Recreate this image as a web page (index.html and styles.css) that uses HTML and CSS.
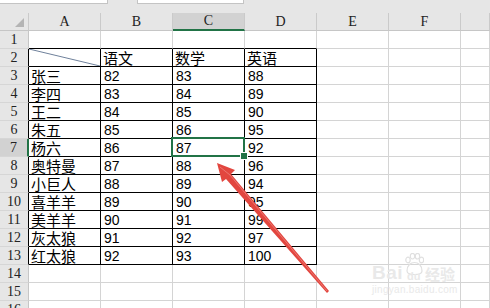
FILE: index.html
```html
<!DOCTYPE html>
<html lang="zh">
<head>
<meta charset="utf-8">
<link rel="stylesheet" href="styles.css">
</head>
<body>
<div class="app">
  <div class="topbar"><div class="box namebox"></div><div class="gap"></div><div class="box fxbox"></div></div>
  <div class="band"></div>
  <div class="sheet">
    <div class="hd corner"><span class="tri"></span></div><div class="hd">A</div><div class="hd">B</div><div class="hd selc">C</div><div class="hd">D</div><div class="hd">E</div><div class="hd">F</div><div class="hd"></div>

    <div class="rh">1</div><div class="c kb"></div><div class="c kb"></div><div class="c kb"></div><div class="c kb"></div><div class="c"></div><div class="c"></div><div class="c"></div>

    <div class="rh kr">2</div><div class="c k diag"><svg class="dl" viewBox="0 0 71 17" preserveAspectRatio="none"><line x1="0" y1="0" x2="71" y2="17"/></svg></div><div class="c k zh"><span>语文</span></div><div class="c k zh"><span>数学</span></div><div class="c k zh"><span>英语</span></div><div class="c"></div><div class="c"></div><div class="c"></div>

    <div class="rh kr">3</div><div class="c k zh"><span>张三</span></div><div class="c k">82</div><div class="c k">83</div><div class="c k">88</div><div class="c"></div><div class="c"></div><div class="c"></div>
    <div class="rh kr">4</div><div class="c k zh"><span>李四</span></div><div class="c k">83</div><div class="c k">84</div><div class="c k">89</div><div class="c"></div><div class="c"></div><div class="c"></div>
    <div class="rh kr">5</div><div class="c k zh"><span>王二</span></div><div class="c k">84</div><div class="c k">85</div><div class="c k">90</div><div class="c"></div><div class="c"></div><div class="c"></div>
    <div class="rh kr">6</div><div class="c k zh"><span>朱五</span></div><div class="c k">85</div><div class="c k">86</div><div class="c k">95</div><div class="c"></div><div class="c"></div><div class="c"></div>
    <div class="rh selr">7</div><div class="c k zh"><span>杨六</span></div><div class="c k">86</div><div class="c k active">87</div><div class="c k">92</div><div class="c"></div><div class="c"></div><div class="c"></div>
    <div class="rh kr">8</div><div class="c k zh"><span>奥特曼</span></div><div class="c k">87</div><div class="c k">88</div><div class="c k">96</div><div class="c"></div><div class="c"></div><div class="c"></div>
    <div class="rh kr">9</div><div class="c k zh"><span>小巨人</span></div><div class="c k">88</div><div class="c k">89</div><div class="c k">94</div><div class="c"></div><div class="c"></div><div class="c"></div>
    <div class="rh kr">10</div><div class="c k zh"><span>喜羊羊</span></div><div class="c k">89</div><div class="c k">90</div><div class="c k">95</div><div class="c"></div><div class="c"></div><div class="c"></div>
    <div class="rh kr">11</div><div class="c k zh"><span>美羊羊</span></div><div class="c k">90</div><div class="c k">91</div><div class="c k">99</div><div class="c"></div><div class="c"></div><div class="c"></div>
    <div class="rh kr">12</div><div class="c k zh"><span>灰太狼</span></div><div class="c k">91</div><div class="c k">92</div><div class="c k">97</div><div class="c"></div><div class="c"></div><div class="c"></div>
    <div class="rh kr">13</div><div class="c k zh"><span>红太狼</span></div><div class="c k">92</div><div class="c k">93</div><div class="c k">100</div><div class="c"></div><div class="c"></div><div class="c"></div>
    <div class="rh">14</div><div class="c"></div><div class="c"></div><div class="c"></div><div class="c"></div><div class="c"></div><div class="c"></div><div class="c"></div>
    <div class="rh">15</div><div class="c"></div><div class="c"></div><div class="c"></div><div class="c"></div><div class="c"></div><div class="c"></div><div class="c"></div>
    <div class="rh">16</div><div class="c"></div><div class="c"></div><div class="c"></div><div class="c"></div><div class="c"></div><div class="c"></div><div class="c"></div>
  </div>

  <div class="watermark">
    <div class="wm-row"><span class="wm-bai">Bai</span><span class="wm-paw"><svg viewBox="0 0 20 22" width="20" height="22"><g fill="none" stroke="#e0e0e0" stroke-width="1.2"><ellipse cx="4" cy="7" rx="2.2" ry="2.8"/><ellipse cx="8.5" cy="3.2" rx="2.2" ry="2.8"/><ellipse cx="13.5" cy="3.2" rx="2.2" ry="2.8"/><ellipse cx="17.5" cy="7" rx="2.2" ry="2.8"/><path d="M3 18 C3 12 7 9.5 10.5 9.5 C14 9.5 18 12 18 18 C18 21 14 21.5 10.5 21.5 C7 21.5 3 21 3 18 Z"/></g></svg><span class="wm-du">du</span></span><span class="wm-jy">经验</span></div>
    <div class="wm-url">jingyan.baidu.com</div>
  </div>

  <svg class="arrow" width="490" height="308" viewBox="0 0 490 308">
    <polygon points="217,163 235,170 231,174 329,291 327,293 226,179 222,182" fill="#e2463f"/>
    <polyline points="220,167 230,175 327,291" fill="none" stroke="#f08a84" stroke-width="1" opacity="0.7"/>
  </svg>
</div>
</body>
</html>
```

FILE: styles.css
```css
* {
  box-sizing: border-box;
  margin: 0;
  padding: 0;
}

html, body {
  width: 490px;
  height: 308px;
  overflow: hidden;
  background: #ffffff;
}

body {
  font-family: "Liberation Sans", "Noto Sans CJK SC", sans-serif;
  color: #000;
}

.app {
  position: relative;
  width: 490px;
  height: 308px;
  overflow: hidden;
  background: #fff;
}

.topbar {
  display: flex;
  height: 4px;
  background: #e6e6e6;
}

.box {
  background: #fff;
  border-bottom: 1px solid #c4c4c4;
}

.namebox {
  width: 108px;
  border-right: 1px solid #c4c4c4;
}

.gap {
  width: 29px;
}

.fxbox {
  width: 107px;
  border-left: 1px solid #c4c4c4;
  border-right: 1px solid #c4c4c4;
}

.band {
  height: 9px;
  background: #e6e6e6;
}

.sheet {
  display: grid;
  grid-template-columns: 29px repeat(6, 72px) 1fr;
  grid-auto-rows: 18px;
}

.hd {
  background: #e6e6e6;
  border-right: 1px solid #cacaca;
  border-bottom: 1px solid #c6c6c6;
  font-family: "Liberation Serif", serif;
  font-size: 14px;
  line-height: 17px;
  text-align: center;
  color: #222;
}

.corner {
  position: relative;
}

.tri {
  position: absolute;
  right: 4px;
  bottom: 3px;
  width: 0;
  height: 0;
  border-left: 9px solid transparent;
  border-bottom: 9px solid #b4b4b4;
}

.selc {
  background: #d2d2d2;
  border-bottom: 2px solid #217346;
  line-height: 16px;
}

.rh {
  background: #e6e6e6;
  border-right: 1px solid #c6c6c6;
  border-bottom: 1px solid #d6d6d6;
  font-family: "Liberation Serif", serif;
  font-size: 14px;
  line-height: 18px;
  text-align: center;
  color: #222;
}

.rh.kr {
  border-right-color: #000;
}

.rh.selr {
  background: #d2d2d2;
  border-right: 2px solid #217346;
}

.c {
  border-right: 1px solid #d4d4d4;
  border-bottom: 1px solid #d4d4d4;
  font-size: 14px;
  line-height: 16px;
  padding: 1px 0 0 3px;
  white-space: nowrap;
}

.c.k {
  border-right-color: #000;
  border-bottom-color: #000;
}

.c.kb {
  border-bottom-color: #000;
}

.zh {
  font-family: "Noto Sans CJK SC", sans-serif;
  font-size: 15px;
  line-height: 17px;
  padding-top: 0;
  padding-left: 2px;
}

.zh span {
  display: inline-block;
  height: 17px;
  line-height: 17px;
  vertical-align: top;
}

.diag {
  padding: 0;
  position: relative;
}

.dl {
  display: block;
  width: 71px;
  height: 17px;
}

.dl line {
  stroke: #6f819b;
  stroke-width: 1;
}

.active {
  position: relative;
}

.active::before {
  content: "";
  position: absolute;
  left: -2px;
  top: -2px;
  right: -1px;
  bottom: -1px;
  border: 2px solid #217346;
}

.active::after {
  content: "";
  position: absolute;
  right: -4px;
  bottom: -4px;
  width: 6px;
  height: 6px;
  background: #217346;
  border: 1px solid #fff;
}

.arrow {
  position: absolute;
  left: 0;
  top: 0;
  pointer-events: none;
}

.watermark {
  position: absolute;
  left: 372px;
  top: 252px;
  width: 92px;
  color: #e9e9e9;
  pointer-events: none;
}

.wm-row {
  display: flex;
  align-items: flex-end;
  height: 31px;
}

.wm-bai {
  font-family: "Liberation Sans", sans-serif;
  font-weight: bold;
  font-size: 19px;
  line-height: 20px;
  letter-spacing: 0.5px;
}

.wm-paw {
  position: relative;
  width: 20px;
  height: 30px;
  display: flex;
  align-items: flex-start;
  margin: 0 1px;
}

.wm-du {
  position: absolute;
  left: 3px;
  bottom: 1px;
  font-family: "Liberation Sans", sans-serif;
  font-weight: bold;
  font-size: 11px;
  line-height: 12px;
}

.wm-jy {
  font-family: "Noto Sans CJK SC", sans-serif;
  font-weight: bold;
  font-size: 15px;
  line-height: 19px;
}

.wm-url {
  font-family: "Liberation Sans", sans-serif;
  font-size: 10px;
  line-height: 12px;
  letter-spacing: 0.3px;
  margin-top: 1px;
}
```
